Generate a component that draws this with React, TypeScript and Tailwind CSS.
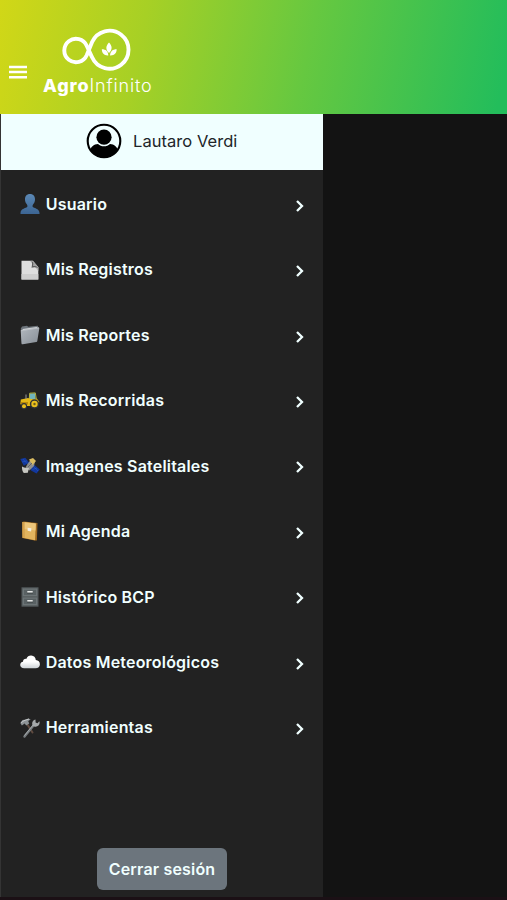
import { useState, type ReactNode } from 'react'

const ICONS: Record<string, ReactNode> = {
  user: (
    <>
      <defs>
        <linearGradient id="bust" x1="0" y1="0" x2="0" y2="1">
          <stop offset="0" stopColor="#5b88b5" />
          <stop offset="1" stopColor="#3c6593" />
        </linearGradient>
      </defs>
      <path fill="url(#bust)" d="M10 0C6.800 0 4.900 2.200 5 5.400c0 1.800.7 3.600 1.800 4.800.7.8.8 2 .4 2.800-.5 1-6.700 1.400-6.700 6v1h19v-1c0-4.600-6.200-5-6.700-6-.4-.8-.3-2 .4-2.800C14.300 9 15 7.200 15 5.400 15.100 2.200 13.200 0 10 0Z" />
    </>
  ),
  page: (
    <>
      <path fill="#dedede" d="M1.500.7h11l5.800 6.800v12H1.500Z" />
      <path fill="#cfcfcf" d="M1.500 14h16.800v5.500H1.500Z" />
      <path fill="#b5b5b5" d="m10 1 8.300 10V7L13 .8Z" />
      <path fill="#5d5d5d" d="M11.500.7c1 2 .5 4.900 0 7 2-.8 5-.8 6.800.4Z" />
      <path fill="#a3a3a3" d="M12.800.9c.8 1.700.5 3.800.2 5.200 1.700-.4 3.500 0 5 1Z" />
    </>
  ),
  folder: (
    <>
      <defs>
        <linearGradient id="folder" x1="0" y1="0" x2="1" y2="1">
          <stop offset="0" stopColor="#b2b8be" />
          <stop offset="1" stopColor="#888f97" />
        </linearGradient>
      </defs>
      <path fill="#6d747b" d="M.8 3.500 2 1.600l5-.9 1.200 1 9.500-.9.700 2L16 16 2 19Z" />
      <path fill="#d8dbde" d="m2.500 4 14.500-2 .5 1.500L3 6Z" />
      <path fill="url(#folder)" d="m.7 5.200 17.700-2.700c.7 0 1 .3.900 1L17.300 16c-.1.600-.4.900-1 1L2.700 19.300c-.7.100-1.100-.2-1.200-.9Z" />
      <path stroke="#c6cacf" strokeWidth=".7" fill="none" d="m1 5.700 18-2.800" />
    </>
  ),
  tractor: (
    <>
      <path fill="#6fb3bd" d="m9.500 2.500 5.500-.3.700 6H9Z" />
      <path fill="none" stroke="#b5b13c" strokeWidth="1" d="m9.200 9 .5-6.800 5.600-.3 1.200 7.300" />
      <path fill="#e5b916" d="M.8 8.500 8 7l3 1 6-.3 2.500 3.300-4 4H2L.3 13Z" />
      <path fill="#b98b0b" d="M1 11h7v2.500H1Z" />
      <circle cx="14.500" cy="13" r="4.700" fill="#303334" />
      <circle cx="14.500" cy="13" r="3.200" fill="#eac01c" />
      <circle cx="14.500" cy="13" r="1.200" fill="#6d5c1c" />
      <circle cx="4" cy="15.200" r="3.100" fill="#303334" />
      <circle cx="4" cy="15.200" r="2" fill="#eac01c" />
      <path stroke="#999" strokeWidth="1" d="M6 3.500V8" />
    </>
  ),
  satellite: (
    <>
      <path fill="#12379c" d="m.3 3 5-1.200 4 5-5.500 3Z" />
      <path fill="#12379c" d="m11 10.500 3.500-1.500 5.300 4.500-3.300 4-5.500-3Z" />
      <path stroke="#2f62c9" strokeWidth=".5" d="m2.800 3 4.300 4.500M2 6l5-1.200M13.500 10.500l4.500 4.500M12.500 13.500l4.500-1.500" />
      <path fill="#8e8f8f" d="m7.500 8 3-4 4.500 1.500-1 4.500-4.500 4.500-4-3Z" />
      <path fill="#d9bb62" d="m9 3.500 4-1.500 3 3-3.500 4Z" />
      <path fill="#c6c6c1" d="M2 10.500c2 1.300 4 1.500 7 1.500l-1.200 4.800-4 .2C2.500 15.500 1.800 13 2 10.500Z" />
      <path stroke="#666" strokeWidth="1" d="m8 11 4-4" />
    </>
  ),
  ledger: (
    <>
      <path fill="#9d681f" d="m2 1 2-.6 13.500 1.700-.6 17.300-2.400.2L2.200 17Z" />
      <path fill="#e2b45e" d="m2.400 1 13.400 1.500-.7 16.700L2.500 16.800Z" />
      <path fill="#edc67a" d="m4.500 1.300 11.300 1.200-.3 7L4.500 8Z" />
      <path fill="#f2eee2" d="m7.600 6.700 3.800.5-.3 3.200-3.500-.6Z" />
      <path stroke="#c18837" strokeWidth=".7" d="m3.900 1.200.1 15.500" />
    </>
  ),
  cabinet: (
    <>
      <path fill="#545b5d" d="M1.500.3h17v19.400h-17Z" />
      <path fill="#6c7476" d="M2.700 1.500h14.600v7.700H2.700Zm0 9h14.600v7.800H2.700Z" />
      <path fill="#596163" d="M4 2.800h12v5.200H4Zm0 9h12v5.200H4Z" />
      <path fill="#e4e6e5" d="M7.300 4h5.400v1.800H7.300Zm0 9h5.400v1.800H7.300Z" />
      <path fill="#3a4042" d="M7 5.800h6v.7H7Zm0 9h6v.7H7Z" />
    </>
  ),
  cloud: (
    <>
      <defs>
        <linearGradient id="cloud" x1="0" y1="0" x2="0" y2="1">
          <stop offset=".5" stopColor="#fff" />
          <stop offset="1" stopColor="#cfd4d8" />
        </linearGradient>
      </defs>
      <path fill="url(#cloud)" d="M4.200 16.200C1.700 16.200.2 14.900.2 13c0-1.800 1.200-3 2.800-3.200-.1-2.100 1.500-3.400 3.500-3.100C7.300 4.600 9 3.400 11.200 3.500c2.700.1 4.400 1.900 4.600 4.500 2.500.2 4.100 1.900 4.100 4.200 0 2.500-1.700 4-4.400 4Z" />
    </>
  ),
  tools: (
    <>
      <path stroke="#604b40" strokeWidth="2" strokeLinecap="round" d="m7 6 5.500 8.500" />
      <path stroke="#767b7e" strokeWidth="2.400" strokeLinecap="round" d="m4.500 18.500 9-11" />
      <path stroke="#b3b7b9" strokeWidth=".8" d="m4.500 17.500 9-11" />
      <path fill="#a5a9ab" d="M13 8c-1.800-2.200-.7-5.800 2.500-6.500l.1 3 1.900.7 1.800-2c1.300 3-1.200 6-4.300 5.500Z" />
      <path fill="#8d9396" d="m.3 5 2.200-3 2-.2 4-1.300 2.200 1L8.200 3l1 2.500-3 2-1.500-2-2.800 2Z" />
      <path stroke="#d0d3d4" strokeWidth=".8" d="m1 4.700 3-2L9 1" />
    </>
  ),
}

const MENU = [
  { label: 'Usuario', icon: 'user' },
  { label: 'Mis Registros', icon: 'page' },
  { label: 'Mis Reportes', icon: 'folder' },
  { label: 'Mis Recorridas', icon: 'tractor' },
  { label: 'Imagenes Satelitales', icon: 'satellite' },
  { label: 'Mi Agenda', icon: 'ledger' },
  { label: 'Histórico BCP', icon: 'cabinet' },
  { label: 'Datos Meteorológicos', icon: 'cloud' },
  { label: 'Herramientas', icon: 'tools' },
]

function Logo() {
  return (
    <div className="mt-[27px] ml-4 w-[112px] text-white">
      <svg className="ml-[18px] block" width="72" height="46" viewBox="61 27 72 46" fill="none">
        <path
          stroke="currentColor"
          strokeWidth="3.900"
          d="M86.700 45.800A11.700 11.700 0 1 0 86.700 55.200L92.100 42.100A19 19 0 1 1 92.100 57.300Z"
        />
        <path fill="currentColor" d="M109 42.500c3.400 3.500 3.600 7 0 10.500-3.600-3.500-3.400-7 0-10.500ZM101.800 49.300c4 0 6.400 2 6.500 6.200-4 .3-6.300-2-6.500-6.200ZM116.700 49.300c-.2 4.200-2.600 6.500-6.600 6.200.1-4.200 2.600-6.200 6.600-6.200Z" />
      </svg>
      <div className="mt-px flex h-6 items-center font-['Inter',sans-serif] text-[18px] leading-6">
        <span className="font-extrabold tracking-[0.9px]">Agro</span>
        <span className="font-light tracking-[0.8px]">Infinito</span>
      </div>
    </div>
  )
}

function Avatar() {
  return (
    <svg width="36" height="36" viewBox="0 0 36 36">
      <defs>
        <clipPath id="avatar-clip"><circle cx="18" cy="18" r="16.500" /></clipPath>
      </defs>
      <circle cx="18" cy="18" r="16.300" fill="none" stroke="#000" strokeWidth="2.100" />
      <g clipPath="url(#avatar-clip)">
        <path d="M4 36v-7c0-5 4-8 8-8 1.800 1.500 3.500 2.300 6 2.300s4.200-.8 6-2.300c4 0 8 3 8 8v7Z" />
      </g>
      <circle cx="18" cy="14.200" r="7.600" />
    </svg>
  )
}

export default function App() {
  const [open, setOpen] = useState(true)

  return (
    <div className="flex h-[900px] w-full flex-col overflow-hidden bg-[#131313] font-['Inter','Liberation_Sans',sans-serif]">
      <header className="flex h-[114px] shrink-0 bg-[linear-gradient(102deg,#d1d717_0%,#a7d025_28%,#66c840_60%,#23bd5b_98%)]">
        <button type="button" aria-label="Menú" onClick={() => setOpen((v) => !v)} className="mt-[65px] ml-[9px] flex h-[14px] w-[18px] cursor-pointer">
          <svg width="18" height="14" viewBox="0 0 18 14" stroke="#fff" strokeWidth="2.500">
            <path d="M0 1.900h18M0 7h18M0 12.300h18" />
          </svg>
        </button>
        <Logo />
      </header>

      {open && (
        <aside className="flex w-[323px] flex-1 flex-col border-l border-[#343434] bg-[#222222]">
          {/* Signed-in user */}
          <div className="flex h-14 shrink-0 items-center bg-[#f0ffff] pb-[2px] pl-[84.500px]">
            <Avatar />
            <span className="ml-[11.500px] text-[16.500px] tracking-[0.05px] text-[#212529]">Lautaro Verdi</span>
          </div>

          <nav className="mt-[1.500px] flex flex-col">
            {MENU.map((item) => (
              <button key={item.label} type="button" className="flex h-[65.450px] cursor-pointer items-center pr-[18px] pl-[18.500px] text-left">
                <svg width="20" height="20" viewBox="0 0 20 20" fill="none">{ICONS[item.icon]}</svg>
                <span className="mb-[0.500px] ml-[6.200px] flex-1 text-[16px] font-semibold tracking-[0.2px] text-[#f0ffff]">{item.label}</span>
                <svg className="mt-[3px]" width="10" height="14" viewBox="0 0 10 14" fill="none" stroke="#f0ffff" strokeWidth="2.300">
                  <path d="m2 2 5 5-5 5" />
                </svg>
              </button>
            ))}
          </nav>

          <button type="button" className="mt-auto mb-[7px] ml-24 h-[42px] w-[130px] shrink-0 cursor-pointer rounded-md bg-[#6c757d] pb-px text-[16px] font-semibold tracking-[0.17px] text-[#f0ffff]">
            Cerrar sesión
          </button>
        </aside>
      )}
      <div className="h-[3px] shrink-0 bg-[#1b1015]" />
    </div>
  )
}
